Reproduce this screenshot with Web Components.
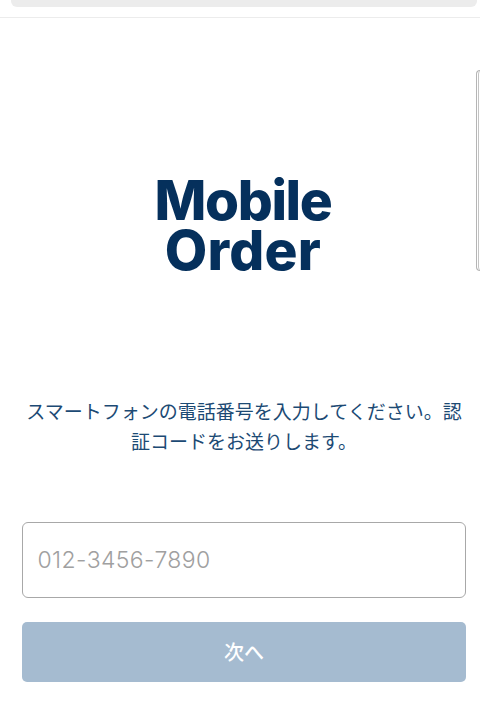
<!DOCTYPE html>
<html lang="ja">
<head>
<meta charset="utf-8">
<title>Mobile Order</title>
<style>
html, body { margin: 0; height: 100%; background: #fff; }
body { font-family: "Noto Sans CJK JP", "Noto Sans", sans-serif; overflow: hidden; }
</style>
</head>
<body>
<login-page>
  <top-bar slot="top"></top-bar>
  <order-logo slot="logo"></order-logo>
  <span slot="message">スマートフォンの電話番号を入力してください。認証コードをお送りします。</span>
  <phone-input slot="input" placeholder="012-3456-7890"></phone-input>
  <next-button slot="action">次へ</next-button>
</login-page>
<script>
class TopBar extends HTMLElement {
    constructor() {
        super();
        this.attachShadow({ mode: 'open' }).innerHTML = `
<style>
:host { display: block; height: 17px; border-bottom: 1px solid #ececec; padding: 0 3px 0 11px; }
.pill { height: 7px; background: #ececec; border-radius: 0 0 6px 6px; }
</style>
<div class="pill"></div>`;
    }
}
customElements.define('top-bar', TopBar);

class OrderLogo extends HTMLElement {
    constructor() {
        super();
        this.attachShadow({ mode: 'open' }).innerHTML = `
<style>
:host { display: block; margin-right: -6px; text-align: center; color: #05305c; font-family: Inter, "Noto Sans", sans-serif; font-weight: 800; font-size: 55px; line-height: 50px; }
div { white-space: nowrap; }
.top { letter-spacing: -1.4px; }
.bottom { letter-spacing: 0.2px; }
</style>
<div class="top">Mobile</div>
<div class="bottom">Order</div>`;
    }
}
customElements.define('order-logo', OrderLogo);

class PhoneInput extends HTMLElement {
    constructor() {
        super();
        this.attachShadow({ mode: 'open' }).innerHTML = `
<style>
:host { display: block; }
input {
    display: block; width: 100%; height: 76px; box-sizing: border-box;
    padding: 0 14.5px; border: 1.5px solid #a8a8a8; border-radius: 6px; background: #fff; outline: none;
    font-family: Inter, sans-serif; font-weight: 300; font-size: 23px; letter-spacing: 0.4px;
}
input::placeholder { color: #a0a0a0; opacity: 1; }
</style>
<input type="tel">`;
        this.shadowRoot.querySelector('input').placeholder = this.getAttribute('placeholder') || '';
    }
}
customElements.define('phone-input', PhoneInput);

class NextButton extends HTMLElement {
    constructor() {
        super();
        this.attachShadow({ mode: 'open' }).innerHTML = `
<style>
:host { display: flex; height: 58px; padding-bottom: 2px; align-items: center; justify-content: center; background: #a5bbd0; color: #fff; border-radius: 5px; font-size: 20px; font-weight: 500; }
</style>
<slot></slot>`;
    }
}
customElements.define('next-button', NextButton);

class LoginPage extends HTMLElement {
    constructor() {
        super();
        this.attachShadow({ mode: 'open' }).innerHTML = `
<style>
:host { display: block; position: relative; height: 717px; }
.logo { padding-top: 157px; }
.message { margin: 121px 14px 0 22px; text-align: center; color: #1c4a74; font-size: 19px; line-height: 30px; }
.form { display: flex; flex-direction: column; gap: 24px; margin: 66px 14px 0 22px; }
.edge { position: absolute; top: 70px; right: 0; width: 3px; height: 199px; border: 1px solid #b5b5b5; border-right: 0; border-radius: 4px 0 0 4px; box-shadow: inset 1px 0 0 #fff, inset 2px 0 0 #c4c4c4; }
</style>
<slot name="top"></slot>
<div class="logo"><slot name="logo"></slot></div>
<div class="message"><slot name="message"></slot></div>
<div class="form"><slot name="input"></slot><slot name="action"></slot></div>
<div class="edge"></div>`;
    }
}
customElements.define('login-page', LoginPage);
</script>
</body>
</html>
